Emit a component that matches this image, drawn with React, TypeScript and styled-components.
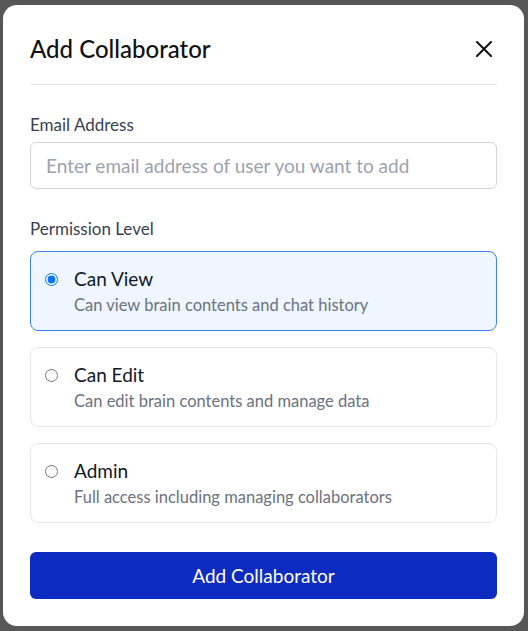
import React, { useState } from 'react';
import styled, { createGlobalStyle } from 'styled-components';

const GlobalStyle = createGlobalStyle`
  html, body {
    margin: 0;
    padding: 0;
    background: #575757;
    font-family: Lato, "Open Sans", sans-serif;
  }
  * {
    box-sizing: border-box;
  }
`;

const permissions = [
  { id: 'view', title: 'Can View', description: 'Can view brain contents and chat history' },
  { id: 'edit', title: 'Can Edit', description: 'Can edit brain contents and manage data' },
  { id: 'admin', title: 'Admin', description: 'Full access including managing collaborators' },
];

const Overlay = styled.div`
  width: 528px;
  height: 631px;
  padding: 5px 4px 5px 3px;
`;

const Modal = styled.div`
  width: 521px;
  height: 621px;
  background: #ffffff;
  border-radius: 14px;
  padding: 27px;
  display: flex;
  flex-direction: column;
`;

const Header = styled.div`
  display: flex;
  align-items: center;
  justify-content: space-between;
  height: 53px;
  padding-bottom: 19px;
  border-bottom: 1px solid #e5e7eb;
`;

const Title = styled.h2`
  margin: 0;
  font-size: 24px;
  font-weight: 500;
  color: #111111;
`;

const CloseButton = styled.button`
  border: none;
  background: none;
  padding: 0;
  margin-right: 5px;
  width: 16px;
  height: 16px;
  display: flex;
  cursor: pointer;
`;

const Field = styled.div<{ $gap: number; $top: number }>`
  display: flex;
  flex-direction: column;
  gap: ${(p) => p.$gap}px;
  margin-top: ${(p) => p.$top}px;
`;

const Label = styled.label`
  font-size: 17px;
  line-height: 20px;
  color: #374151;
`;

const Input = styled.input`
  height: 47px;
  width: 100%;
  border: 1px solid #d1d5db;
  border-radius: 6px;
  padding: 0 15px;
  font-family: inherit;
  font-size: 19px;
  color: #111827;
  outline: none;
  &::placeholder {
    color: #9ca3af;
  }
`;

const CardList = styled.div`
  display: flex;
  flex-direction: column;
  gap: 16px;
`;

const Card = styled.label<{ $active: boolean }>`
  height: 80px;
  display: flex;
  align-items: flex-start;
  gap: 16px;
  padding: 15px 14px;
  border: 1px solid ${(p) => (p.$active ? '#3b82f6' : '#e5e7eb')};
  background: ${(p) => (p.$active ? '#eff6ff' : '#ffffff')};
  border-radius: 8px;
  cursor: pointer;
`;

const Radio = styled.input`
  margin: 6px 0 0 0;
  width: 13px;
  height: 13px;
  flex-shrink: 0;
`;

const CardText = styled.div`
  display: flex;
  flex-direction: column;
  gap: 4px;
`;

const CardTitle = styled.span`
  font-size: 19px;
  line-height: 24px;
  color: #111827;
`;

const CardDesc = styled.span`
  font-size: 16.5px;
  line-height: 20px;
  color: #6b7280;
`;

const SubmitButton = styled.button`
  margin-top: 29px;
  height: 47px;
  width: 100%;
  border: none;
  border-radius: 6px;
  background: #0e2bc1;
  color: #ffffff;
  font-family: inherit;
  font-size: 19px;
  cursor: pointer;
`;

const App = () => {
  const [level, setLevel] = useState('view');

  return (
    <>
      <GlobalStyle />
      <Overlay>
        <Modal>
          <Header>
            <Title>Add Collaborator</Title>
            <CloseButton aria-label="Close">
              <svg width="16" height="16" viewBox="0 0 16 16">
                <path d="M1 1L15 15M15 1L1 15" stroke="#111" strokeWidth="2" strokeLinecap="round" />
              </svg>
            </CloseButton>
          </Header>

          <Field $gap={7} $top={30}>
            <Label>Email Address</Label>
            <Input placeholder="Enter email address of user you want to add" />
          </Field>

          <Field $gap={12} $top={30}>
            <Label>Permission Level</Label>
            <CardList>
              {permissions.map((p) => (
                <Card key={p.id} $active={level === p.id}>
                  <Radio
                    type="radio"
                    name="permission"
                    checked={level === p.id}
                    onChange={() => setLevel(p.id)}
                  />
                  <CardText>
                    <CardTitle>{p.title}</CardTitle>
                    <CardDesc>{p.description}</CardDesc>
                  </CardText>
                </Card>
              ))}
            </CardList>
          </Field>

          <SubmitButton>Add Collaborator</SubmitButton>
        </Modal>
      </Overlay>
    </>
  );
};

export default App;
